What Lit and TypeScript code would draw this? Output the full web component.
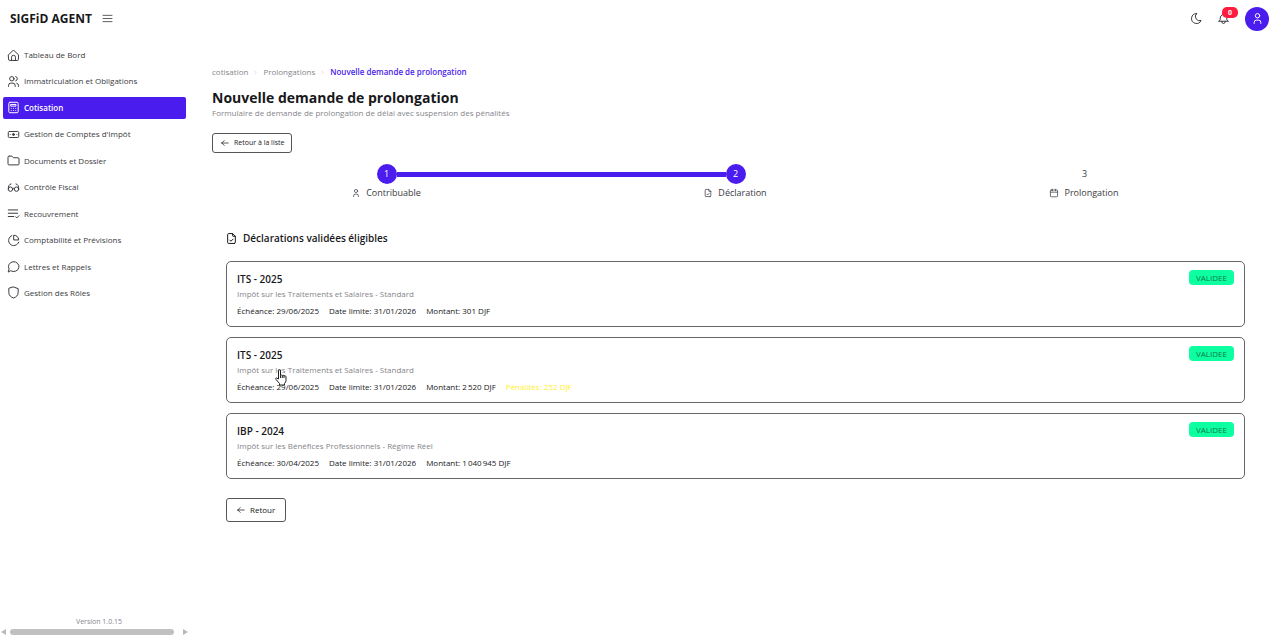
import { LitElement, html, css, svg, nothing } from "lit";
import { customElement, state } from "lit/decorators.js";
import { classMap } from "lit/directives/class-map.js";

const shapes = {
  home: svg`<path d="M3 10.500L10.500 3.600a2.300 2.300 0 0 1 3 0L21 10.500V19a2 2 0 0 1-2 2H5a2 2 0 0 1-2-2z"/><path d="M8.500 21v-6a3.500 3.500 0 0 1 7 0v6"/>`,
  users: svg`<circle cx="9" cy="7" r="4"/><path d="M3 21v-2a4 4 0 0 1 4-4h4a4 4 0 0 1 4 4v2M16 3.130a4 4 0 0 1 0 7.750M21 21v-2a4 4 0 0 0-3-3.850"/>`,
  calculator: svg`<rect x="3.500" y="2.500" width="17" height="19" rx="2"/><path d="M7.500 6.500h9v3h-9zM8 13.500v.01M12 13.500v.01M16 13.500v.01M8 17.500v.01M12 17.500v.01M16 17.500v.01"/>`,
  cash: svg`<rect x="2.500" y="6.500" width="19" height="11" rx="2"/><circle cx="12" cy="12" r="1.800" fill="currentColor"/><path d="M6 12h.01M18 12h.01"/>`,
  folder: svg`<path d="M4 4h5l3 3h8a2 2 0 0 1 2 2v9a2 2 0 0 1-2 2H4a2 2 0 0 1-2-2V6a2 2 0 0 1 2-2"/>`,
  glasses: svg`<path d="M2.500 15C2.500 9 4 6 7.500 5.500M21.500 15c0-6-1.500-9-5-9.500M10.500 14q1.500-1.500 3 0"/><circle cx="6.500" cy="15" r="4"/><circle cx="17.500" cy="15" r="4"/>`,
  list: svg`<path d="M2.500 5.500h17M2.500 11.500h17M2.500 17.500h10M16 18l2 2 4-4"/>`,
  chart: svg`<path d="M9 3A9.500 9.500 0 1 0 21.500 15M13 2.500a9.200 9.200 0 0 1 8.500 8.500H13z"/>`,
  message: svg`<path d="M2.500 21.500l1.500-5A9.500 9 0 1 1 7.500 20z"/>`,
  shield: svg`<path d="M12 2l8.500 3v7c0 5-3.500 8.500-8.500 10-5-1.500-8.500-5-8.500-10V5z"/>`,
  menu: svg`<path d="M2 5h20M2 12h20M2 19h20"/>`,
  moon: svg`<path d="M12 3h.393a7.500 7.500 0 0 0 7.920 12.446A9 9 0 1 1 12 2.992z"/>`,
  bell: svg`<path d="M10 5a2 2 0 1 1 4 0 7 7 0 0 1 4 6v3a4 4 0 0 0 3 3H3a4 4 0 0 0 3-3v-3a7 7 0 0 1 4-6M9 17v1a3 3 0 0 0 6 0v-1"/>`,
  user: svg`<circle cx="12" cy="7" r="4"/><path d="M6 21v-2a4 4 0 0 1 4-4h4a4 4 0 0 1 4 4v2"/>`,
  file: svg`<path d="M14 3v4a1 1 0 0 0 1 1h4"/><path d="M17 21H7a2 2 0 0 1-2-2V5a2 2 0 0 1 2-2h7l5 5v11a2 2 0 0 1-2 2zM9 15l2 2 4-4"/>`,
  calendar: svg`<rect x="3" y="4.500" width="18" height="17" rx="2"/><path d="M16 2.500v4M8 2.500v4M3 10h18"/>`,
  back: svg`<path d="M4 12h16M4 12l6 6M4 12l6-6"/>`,
  chevron: svg`<path d="M9 6l6 6-6 6"/>`,
};
type IconName = keyof typeof shapes;

const icon = (name: IconName, size = "") => html`<svg
  class="icon ${size}" viewBox="2 2 20 20" aria-hidden="true">${shapes[name]}</svg>`;

const menu: { icon: IconName; label: string }[] = [
  { icon: "home", label: "Tableau de Bord" },
  { icon: "users", label: "Immatriculation et Obligations" },
  { icon: "calculator", label: "Cotisation" },
  { icon: "cash", label: "Gestion de Comptes d'Impôt" },
  { icon: "folder", label: "Documents et Dossier" },
  { icon: "glasses", label: "Contrôle Fiscal" },
  { icon: "list", label: "Recouvrement" },
  { icon: "chart", label: "Comptabilité et Prévisions" },
  { icon: "message", label: "Lettres et Rappels" },
  { icon: "shield", label: "Gestion des Rôles" },
];

const steps: { icon: IconName; label: string }[] = [
  { icon: "user", label: "Contribuable" },
  { icon: "file", label: "Déclaration" },
  { icon: "calendar", label: "Prolongation" },
];

interface Declaration {
  title: string;
  kind: string;
  due: string;
  limit: string;
  amount: string;
  penalty?: string;
  hovered?: boolean;
}

const declarations: Declaration[] = [
  { title: "ITS - 2025", kind: "Impôt sur les Traitements et Salaires - Standard", due: "29/06/2025", limit: "31/01/2026", amount: "301" },
  { title: "ITS - 2025", kind: "Impôt sur les Traitements et Salaires - Standard", due: "29/06/2025", limit: "31/01/2026", amount: "2\u202f520", penalty: "252", hovered: true },
  { title: "IBP - 2024", kind: "Impôt sur les Bénéfices Professionnels - Régime Réel", due: "30/04/2025", limit: "31/01/2026", amount: "1\u202f040\u202f945" },
];

@customElement("app-root")
export class AppRoot extends LitElement {
  @state() private active = "Cotisation";
  @state() private step = 2;

  static styles = css`
    :host {
      --accent: #4a1ced;
      --ink: #18181b;
      --text: #3a3a40;
      --muted: #85858b;
      display: flex;
      flex-direction: column;
      min-height: 100vh;
      background: #fff;
      color: var(--ink);
      font: 400 8px/12px "Open Sans", "Noto Sans", sans-serif;
    }
    * { box-sizing: border-box; }
    button { font: inherit; color: inherit; background: none; border: 0; padding: 0; cursor: pointer; }
    a { color: inherit; text-decoration: none; }
    h1, h2, h3, p, ul, ol { margin: 0; padding: 0; font-weight: inherit; }
    ul, ol { list-style: none; }
    .icon {
      width: 11px; height: 11px; flex: none; display: block; overflow: visible;
      fill: none; stroke: currentColor; stroke-width: 1.8;
      stroke-linecap: round; stroke-linejoin: round;
    }
    .small { width: 8px; height: 8px; }
    .tiny { width: 5px; height: 5px; }
    .wide { width: 9px; height: 9px; }

    .top { display: flex; align-items: center; height: 37px; padding: 0 11px 0 10px; }
    .brand { font-size: 12px; line-height: 16px; font-weight: 700; margin-right: 11px; }
    .top .icon { color: var(--text); }
    .actions { display: flex; align-items: center; margin-left: auto; gap: 16px; }
    .bell { position: relative; }
    .count {
      position: absolute; left: 4px; top: -6px; width: 16px; height: 11px;
      border-radius: 5px; background: #ff1c3f; color: #fff;
      font-size: 7px; line-height: 11px; font-weight: 700; text-align: center;
    }
    .avatar {
      display: grid; place-items: center; width: 24px; height: 24px;
      border-radius: 50%; background: var(--accent);
    }
    .avatar .icon { color: #fff; }

    .body { display: flex; flex: 1; }
    .side { display: flex; flex-direction: column; width: 191px; flex: none; }
    .menu {
      display: flex; flex-direction: column; justify-content: space-between;
      height: 260px; margin-top: 7px; padding: 0 5px 0 3px;
    }
    .item {
      display: flex; align-items: center; gap: 5px; height: 22px; padding: 0 5px;
      border-radius: 2px; color: var(--text);
    }
    .item.on { background: var(--accent); color: #fff; font-weight: 600; }
    .version { margin-top: auto; padding-left: 7px; text-align: center; color: var(--muted); font-size: 7px; }
    .scroll { display: flex; align-items: center; justify-content: space-between; height: 8px; padding: 0 3px 0 1px; }
    .thumb { flex: 1; height: 6px; margin: 0 9px 0 4px; border-radius: 3px; background: #c1c1c1; }
    .arrow { width: 5px; height: 6px; fill: #b9b9b9; }

    main { flex: 1; min-width: 0; padding: 29px 21px 0; }
    .crumbs { display: flex; align-items: center; color: var(--muted); gap: 5px; }
    .crumbs .icon { color: #b9b9bd; }
    .crumbs .current { color: var(--accent); font-weight: 600; }
    h1 { margin-top: 11px; font-size: 14px; line-height: 18px; font-weight: 700; }
    .lead { color: var(--muted); }
    .btn {
      display: flex; align-items: center; gap: 5px; height: 20px; padding: 0 7px 0 8px;
      border: 1px solid #55555a; border-radius: 3px; font-size: 7px;
    }
    .lead + .btn { margin-top: 14px; }
    .btn.large { height: 24px; padding: 0 10px; margin-top: 19px; font-size: 8px; }

    .steps { display: grid; grid-template-columns: repeat(3, 1fr); margin-top: 11px; }
    .step { display: grid; justify-items: center; row-gap: 3px; font-size: 9px; color: var(--text); }
    .mark { display: flex; align-items: center; width: 100%; }
    .mark::before, .mark::after { content: ""; flex: 1; height: 5px; }
    .mark.from::before, .mark.to::after { background: var(--accent); }
    .dot { width: 20px; line-height: 20px; border-radius: 50%; text-align: center; }
    .dot.done { background: var(--accent); color: #fff; }
    .name { display: flex; align-items: center; gap: 6px; }

    .panel { padding: 0 14px; margin-top: 31px; }
    h2 { display: flex; align-items: center; gap: 6px; font-size: 10px; line-height: 16px; font-weight: 600; }
    .cards { display: grid; gap: 10px; margin-top: 15px; }
    .card {
      position: relative; display: flex; justify-content: space-between; align-items: flex-start;
      min-height: 66px; padding: 8px 10px; border: 1px solid #66666b; border-radius: 5px;
    }
    h3 { font-size: 10px; line-height: 18px; font-weight: 600; }
    .kind { color: var(--muted); }
    .facts { display: flex; gap: 10px; margin-top: 5px; }
    .penalty { color: #fff02e; }
    .badge {
      width: 45px; border-radius: 4px; background: #0dffa0; color: #08794c;
      line-height: 15px; text-align: center;
    }
    .pointer { position: absolute; left: 48px; top: 31px; width: 12px; height: 17px; }
  `;

  private renderCard(d: Declaration) {
    return html`<li class="card">
      <div>
        <h3>${d.title}</h3>
        <p class="kind">${d.kind}</p>
        <div class="facts">
          <span>Échéance: ${d.due}</span>
          <span>Date limite: ${d.limit}</span>
          <span>Montant: ${d.amount} DJF</span>
          ${d.penalty ? html`<span class="penalty">Pénalités: ${d.penalty} DJF</span>` : nothing}
        </div>
      </div>
      <span class="badge">VALIDEE</span>
      ${d.hovered
        ? html`<svg class="pointer" viewBox="0 0 12 17" aria-hidden="true">
            <path d="M3.500 10V2q0-1.300 1-1.300T5.500 2v4.500q.9-1 1.800 0 .9-.8 1.700.3 1.600-.6 2 1v3.700q0 1.500-1.500 3V16H4.500v-1.500L1 10.500q-.8-1.500.6-1.600z" fill="#fff" stroke="#222" stroke-width="1" stroke-linejoin="round"/>
            <path d="M5.500 6.500V9M7.300 6.700V9M9 7V9" stroke="#222" stroke-width="1" fill="none"/>
          </svg>`
        : nothing}
    </li>`;
  }

  render() {
    return html`
      <header class="top">
        <span class="brand">SIGFiD AGENT</span>
        <button aria-label="Menu">${icon("menu", "wide")}</button>
        <div class="actions">
          <button aria-label="Thème">${icon("moon")}</button>
          <button class="bell" aria-label="Notifications">${icon("bell")}<span class="count">0</span></button>
          <button class="avatar" aria-label="Profil">${icon("user")}</button>
        </div>
      </header>
      <div class="body">
        <aside class="side">
          <nav class="menu">
            ${menu.map((m) => html`<a href="#" class=${classMap({ item: true, on: m.label === this.active })}
              @click=${(e: Event) => { e.preventDefault(); this.active = m.label; }}>${icon(m.icon)}<span>${m.label}</span></a>`)}
          </nav>
          <p class="version">Version 1.0.15</p>
          <div class="scroll" aria-hidden="true">
            <svg class="arrow" viewBox="0 0 5 6"><path d="M5 0v6L0 3z"/></svg>
            <div class="thumb"></div>
            <svg class="arrow" viewBox="0 0 5 6"><path d="M0 0v6l5-3z"/></svg>
          </div>
        </aside>
        <main>
          <nav class="crumbs">
            <a href="#">cotisation</a>${icon("chevron", "tiny")}
            <a href="#">Prolongations</a>${icon("chevron", "tiny")}
            <a href="#" class="current">Nouvelle demande de prolongation</a>
          </nav>
          <h1>Nouvelle demande de prolongation</h1>
          <p class="lead">Formulaire de demande de prolongation de délai avec suspension des pénalités</p>
          <button class="btn">${icon("back", "small")}<span>Retour à la liste</span></button>
          <ol class="steps">
            ${steps.map((s, i) => html`<li class="step">
              <div class=${classMap({ mark: true, from: i > 0 && i < this.step, to: i + 1 < this.step })}>
                <span class=${classMap({ dot: true, done: i < this.step })}>${i + 1}</span>
              </div>
              <span class="name">${icon(s.icon, "small")}${s.label}</span>
            </li>`)}
          </ol>
          <section class="panel">
            <h2>${icon("file")}Déclarations validées éligibles</h2>
            <ul class="cards">${declarations.map((d) => this.renderCard(d))}</ul>
            <button class="btn large" @click=${() => { this.step = 1; }}>${icon("back", "small")}<span>Retour</span></button>
          </section>
        </main>
      </div>
    `;
  }
}
